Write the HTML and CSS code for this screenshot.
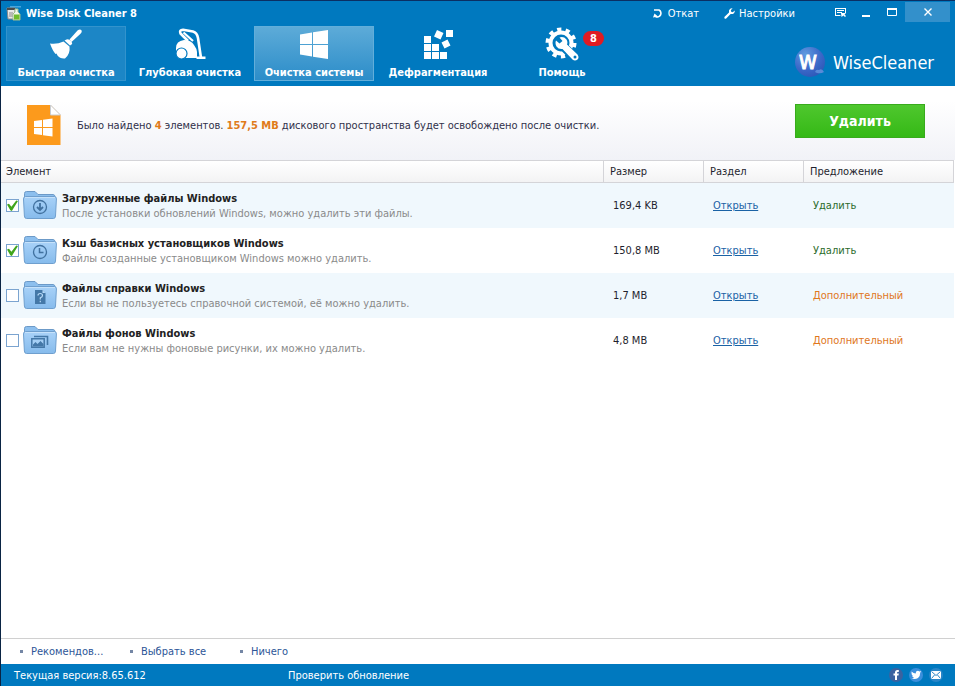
FILE: index.html
```html
<!DOCTYPE html>
<html lang="ru">
<head>
    <meta charset="UTF-8">
    <meta name="viewport" content="width=device-width, initial-scale=1.0">
    <title>Wise Disk Cleaner 8</title>
    <link rel="stylesheet" href="styles.css">
</head>
<body>
    <!-- Shared icon shapes -->
    <svg class="sprite" aria-hidden="true">
        <defs>
            <linearGradient id="folder-fill" x1="0" y1="0" x2="0" y2="1">
                <stop offset="0" stop-color="#a9d2f8"/>
                <stop offset="1" stop-color="#86bbec"/>
            </linearGradient>
            <radialGradient id="ball-fill" cx="0.35" cy="0.25" r="0.85">
                <stop offset="0" stop-color="#5f9ae0"/>
                <stop offset="0.6" stop-color="#3b68c8"/>
                <stop offset="1" stop-color="#2b55b4"/>
            </radialGradient>
        </defs>
        <symbol id="folder" viewBox="0 0 34 28">
            <path d="M1.500 5V2.500Q1.500 .5 3.500 .5H12L15 3.500H30Q32 3.500 32 6V10H1.500Z" fill="#8cbfee" stroke="#6c9ac8"/>
            <path d="M2.500 5.500H31.500Q33.500 5.500 33.400 8L32.500 25Q32.400 27.500 30.500 27.500H3.500Q1.500 27.500 1.400 25L.5 8Q.5 5.500 2.500 5.500Z" fill="url(#folder-fill)" stroke="#6f9fce"/>
            <path d="M2 6.500H32" stroke="#c6e2fb"/>
        </symbol>
    </svg>

    <div class="window">
        <header class="header">
            <div class="titlebar">
                <svg class="app-icon" width="16" height="16" viewBox="0 0 16 16" aria-hidden="true">
                    <path d="M4 1H15V2.500H4Z" fill="#49a6dd"/>
                    <path d="M1 3H9V14H2Z" fill="#e8e8e8" stroke="#8a8a8a"/>
                    <path d="M1 3H9V5H1Z" fill="#4b4b4b"/>
                    <path d="M4 7V12M6 7V12" stroke="#888"/>
                    <path d="M9 4H12V7L14 9V15H7V9L9 7Z" fill="#f2f7ea" stroke="#9dbb8c"/>
                    <path d="M8 9.500H13.500V14.500H8Z" fill="#6fbd2c"/>
                </svg>
                <h1 class="title">Wise Disk Cleaner 8</h1>
                <button class="title-link" type="button">
                    <svg width="11" height="11" viewBox="0 0 11 11" aria-hidden="true">
                        <path d="M1 2H6A3.500 3.500 0 1 1 2.500 8.500" fill="none" stroke="#fff" stroke-width="1.600"/>
                        <path d="M0 9.500L1.500 5.500L5 8.500Z" fill="#fff"/>
                    </svg>
                    Откат
                </button>
                <button class="title-link" type="button">
                    <svg width="11" height="11" viewBox="0 0 11 11" aria-hidden="true">
                        <path d="M.6 8.800L5 4.400Q4.500 2 6.200 .8Q7.400 0 8.600 .3L6.800 2.200L7.200 3.800L8.800 4.200L10.700 2.400Q11 3.700 10.100 4.900Q8.800 6.500 6.600 6L2.200 10.400Q1.300 11 .6 10.400Q0 9.700 .6 8.800Z" fill="#fff"/>
                    </svg>
                    Настройки
                </button>
                <div class="window-controls">
                    <button type="button" aria-label="Сменить оформление">
                        <svg width="11" height="9" viewBox="0 0 11 9" aria-hidden="true">
                            <path d="M0 .5H11M.5 0V7M10.500 0V5M2 2.500H9M2 4.500H7M0 7.500H5.500" stroke="#fff" fill="none"/>
                            <path d="M6 5H11L9.500 6.500L11 8L10 9L8.500 7.500L6.500 9Z" fill="#fff"/>
                        </svg>
                    </button>
                    <button type="button" aria-label="Свернуть">
                        <svg width="10" height="9" viewBox="0 0 10 9" aria-hidden="true"><path d="M1 8H9" stroke="#fff" stroke-width="2"/></svg>
                    </button>
                    <button type="button" aria-label="Развернуть">
                        <svg width="10" height="8" viewBox="0 0 10 8" aria-hidden="true"><path d="M.5 1V7.500H9.500V1M0 1H10" fill="none" stroke="#fff"/><path d="M0 0H10V2H0Z" fill="#fff"/></svg>
                    </button>
                    <button class="close" type="button" aria-label="Закрыть">
                        <svg width="8" height="8" viewBox="0 0 8 8" aria-hidden="true"><path d="M.5 .5L7.500 7.500M7.500 .5L.5 7.500" stroke="#fff" stroke-width="1.400"/></svg>
                    </button>
                </div>
            </div>

            <div class="toolbar">
                <nav class="tabs">
                    <button class="tab hover" type="button">
                        <svg width="34" height="34" viewBox="0 0 34 34" aria-hidden="true">
                            <path d="M20.500 12.500L28.500 3.500Q31 1.500 32.500 3.200Q33.500 5 31.500 6.800L22.500 15Z" fill="#fff"/>
                            <path d="M17.500 12.500Q19.500 11.500 22 14Q24 16.500 22.500 17.500L21 18.500L15.500 13.500Z" fill="#fff"/>
                            <path d="M14.500 14.500L20.500 19.500Q21.500 27 16 31.500Q11 32 8.500 28.500L7.500 26.500L6.500 27Q3.500 23.500 1 16.500Q8 17.500 14.500 14.500Z" fill="#fff"/>
                        </svg>
                        <span>Быстрая очистка</span>
                    </button>
                    <button class="tab" type="button">
                        <svg width="34" height="34" viewBox="0 0 34 34" aria-hidden="true">
                            <path d="M15 14L7.500 6.500Q6 3 10 2.800L20 4.500Q24 5.500 25 11L28 31" fill="none" stroke="#fff" stroke-width="2.600" stroke-linejoin="round"/>
                            <path d="M10.500 5.500L20 14" stroke="#fff" stroke-width="2.200"/>
                            <path d="M3 21Q3 14 11 13Q18 13 21 18Q24 22 24 25V31H13L3 25Z" fill="#fff"/>
                            <path d="M23.500 29.500H32.500V32H23.500Z" fill="#fff"/>
                            <circle cx="8.500" cy="26.500" r="5.500" fill="#fff" stroke="#0079bf" stroke-width="1.200"/>
                        </svg>
                        <span>Глубокая очистка</span>
                    </button>
                    <button class="tab active" type="button">
                        <svg width="34" height="34" viewBox="0 0 34 34" aria-hidden="true">
                            <path d="M3 7.500L15 5.500V17H3ZM16 5.300L31 3V17H16ZM3 18H15V29.500L3 27.500ZM16 18H31V32L16 29.700Z" fill="#fff"/>
                        </svg>
                        <span>Очистка системы</span>
                    </button>
                    <button class="tab" type="button">
                        <svg width="34" height="34" viewBox="0 0 34 34" aria-hidden="true">
                            <path d="M3 9H10V16H3ZM3 17H10V24H3ZM3 25H10V32H3ZM11 17H18V24H11ZM11 25H18V32H11ZM19 25H26V32H19ZM25 3H32V10H25ZM16 3L22.500 6L19.500 12.500L13 9.500ZM20.500 15.500L26.500 12.500L29.500 18.500L23.500 21.500Z" fill="#fff"/>
                        </svg>
                        <span>Дефрагментация</span>
                    </button>
                    <button class="tab" type="button">
                        <svg width="34" height="34" viewBox="0 0 34 34" aria-hidden="true">
                            <circle cx="16" cy="16" r="10.500" fill="none" stroke="#fff" stroke-width="4"/>
                            <circle cx="16" cy="16" r="13.500" fill="none" stroke="#fff" stroke-width="4" stroke-dasharray="4.200 4.282"/>
                            <path d="M17 18L30 31" stroke="#0079bf" stroke-width="9" stroke-linecap="round"/>
                            <path d="M11 13.500L14.500 16.500L17.500 14L14.500 10.500Q18.500 9 21.500 12.500Q23 15 22 17.500L32.500 27.500Q34.500 30.500 32.500 32.500Q30 34.500 27.500 32.500L17.500 22Q13.500 22.500 11.500 19.500Q9.800 16.500 11 13.500Z" fill="#fff"/>
                            <circle cx="30" cy="30" r="1.500" fill="#0079bf"/>
                        </svg>
                        <span>Помощь</span>
                        <span class="badge">8</span>
                    </button>
                </nav>
                <div class="brand">
                    <svg width="34" height="32" viewBox="0 0 34 32" aria-hidden="true">
                        <circle cx="17" cy="16" r="15" fill="url(#ball-fill)"/>
                        <path d="M22 26Q23 23 26 24Q29 22 31 26Q28 28 24 27Z" fill="#5a8ad8"/>
                        <text class="brand-letter" x="15" y="23" text-anchor="middle">W</text>
                    </svg>
                    <span>WiseCleaner</span>
                </div>
            </div>
        </header>

        <section class="summary">
            <svg width="34" height="40" viewBox="0 0 34 40" aria-hidden="true">
                <path d="M0 0H23.500L33.500 10V40H0Z" fill="#fc9a1c"/>
                <path d="M23.500 0V10H33.500Z" fill="#fff" stroke="#c9ccd0"/>
                <path d="M7 16L15 15V22H7ZM16 14.800L25.500 13.500V22H16ZM7 23H15V30L7 29ZM16 23H25.500V31.500L16 30.200Z" fill="#fff"/>
            </svg>
            <p>Было найдено <b>4</b> элементов. <b>157,5 MB</b> дискового пространства будет освобождено после очистки.</p>
            <button class="clean-button" type="button">Удалить</button>
        </section>

        <main class="content">
            <table class="items">
                <colgroup>
                    <col>
                    <col class="col-size">
                    <col class="col-section">
                    <col class="col-advice">
                </colgroup>
                <thead>
                    <tr>
                        <th scope="col">Элемент</th>
                        <th scope="col">Размер</th>
                        <th scope="col">Раздел</th>
                        <th scope="col">Предложение</th>
                    </tr>
                </thead>
                <tbody>
                    <tr>
                        <td>
                            <div class="item">
                                <input type="checkbox" id="downloads" checked>
                                <svg width="34" height="28" viewBox="0 0 34 28" aria-hidden="true">
                                    <use href="#folder"/>
                                    <circle cx="17" cy="16" r="6.500" fill="none" stroke="#41719f" stroke-width="1.300"/>
                                    <path d="M17 12V18M14 16L17 19L20 16" fill="none" stroke="#41719f" stroke-width="1.800"/>
                                </svg>
                                <label for="downloads">
                                    <strong>Загруженные файлы Windows</strong>
                                    <span>После установки обновлений Windows, можно удалить эти файлы.</span>
                                </label>
                            </div>
                        </td>
                        <td>169,4 KB</td>
                        <td><a href="#">Открыть</a></td>
                        <td class="remove">Удалить</td>
                    </tr>
                    <tr>
                        <td>
                            <div class="item">
                                <input type="checkbox" id="installers" checked>
                                <svg width="34" height="28" viewBox="0 0 34 28" aria-hidden="true">
                                    <use href="#folder"/>
                                    <circle cx="17" cy="16" r="6.500" fill="none" stroke="#41719f" stroke-width="1.300"/>
                                    <path d="M16.500 12V16.500H20.500" fill="none" stroke="#41719f" stroke-width="1.500"/>
                                </svg>
                                <label for="installers">
                                    <strong>Кэш базисных установщиков Windows</strong>
                                    <span>Файлы созданные установщиком Windows можно удалить.</span>
                                </label>
                            </div>
                        </td>
                        <td>150,8 MB</td>
                        <td><a href="#">Открыть</a></td>
                        <td class="remove">Удалить</td>
                    </tr>
                    <tr>
                        <td>
                            <div class="item">
                                <input type="checkbox" id="help">
                                <svg width="34" height="28" viewBox="0 0 34 28" aria-hidden="true">
                                    <use href="#folder"/>
                                    <path d="M12 9H19.500L22.500 12V23H12Z" fill="#4478a8"/>
                                    <path d="M19.500 9V12H22.500" fill="#b9dcf9"/>
                                    <path d="M15 14.500Q15 12.500 17.200 12.500Q19.500 12.500 19.500 14.500Q19.500 16 17.300 16.800V18.500M17.300 19.800V21.300" fill="none" stroke="#b9dcf9" stroke-width="1.200"/>
                                </svg>
                                <label for="help">
                                    <strong>Файлы справки Windows</strong>
                                    <span>Если вы не пользуетесь справочной системой, её можно удалить.</span>
                                </label>
                            </div>
                        </td>
                        <td>1,7 MB</td>
                        <td><a href="#">Открыть</a></td>
                        <td class="optional">Дополнительный</td>
                    </tr>
                    <tr>
                        <td>
                            <div class="item">
                                <input type="checkbox" id="wallpapers">
                                <svg width="34" height="28" viewBox="0 0 34 28" aria-hidden="true">
                                    <use href="#folder"/>
                                    <path d="M11 10.500H24.500V19" fill="none" stroke="#4478a8" stroke-width="1.600"/>
                                    <path d="M8.800 12.800H21.200V21.200H8.800Z" fill="#a5cff5" stroke="#4478a8" stroke-width="1.500"/>
                                    <path d="M10 20.500V18.500L12.500 16L14.500 18L17.500 15L20.500 18V20.500Z" fill="#4478a8"/>
                                </svg>
                                <label for="wallpapers">
                                    <strong>Файлы фонов Windows</strong>
                                    <span>Если вам не нужны фоновые рисунки, их можно удалить.</span>
                                </label>
                            </div>
                        </td>
                        <td>4,8 MB</td>
                        <td><a href="#">Открыть</a></td>
                        <td class="optional">Дополнительный</td>
                    </tr>
                </tbody>
            </table>
        </main>

        <ul class="selection">
            <li><button type="button">Рекомендов...</button></li>
            <li><button type="button">Выбрать все</button></li>
            <li><button type="button">Ничего</button></li>
        </ul>

        <footer class="statusbar">
            <span class="version">Текущая версия:8.65.612</span>
            <a href="#">Проверить обновление</a>
            <div class="social">
                <a href="#" aria-label="Facebook">
                    <svg width="14" height="14" viewBox="0 0 14 14" aria-hidden="true">
                        <circle cx="7" cy="7" r="7" fill="#3a62a0"/>
                        <path d="M6 12V7.500H4.500V5.500H6V4.500Q6 2 8.500 2H9.800V4H8.800Q8 4 8 4.800V5.500H9.800L9.500 7.500H8V12Z" fill="#fff"/>
                    </svg>
                </a>
                <a href="#" aria-label="Twitter">
                    <svg width="14" height="14" viewBox="0 0 14 14" aria-hidden="true">
                        <circle cx="7" cy="7" r="7" fill="#3b8fdc"/>
                        <path d="M2.500 3.500Q4.500 5.500 6.700 5.500Q6.500 3 8.800 2.800Q9.800 2.800 10.300 3.400L12 3L11.200 4.700Q11.300 8 9 10Q6 12 2.300 10.300Q4 10.200 5 9.400Q3.500 9 3.200 7.900H4Q2.600 7.200 2.600 5.800Z" fill="#fff"/>
                    </svg>
                </a>
                <a href="#" aria-label="Почта">
                    <svg width="14" height="14" viewBox="0 0 14 14" aria-hidden="true">
                        <circle cx="7" cy="7" r="7" fill="#2a86c8"/>
                        <path d="M2 3H12V11H2Z" fill="#fff"/>
                        <path d="M2.500 3.500L7 7.500L11.500 3.500M2.500 10.500L5.500 7M11.500 10.500L8.500 7" fill="none" stroke="#2a86c8"/>
                    </svg>
                </a>
            </div>
        </footer>
    </div>
</body>
</html>
```
FILE: styles.css
```css
* {
    box-sizing: border-box;
}

body {
    margin: 0;
    font-family: Tahoma, "DejaVu Sans Condensed", "DejaVu Sans", sans-serif;
    font-size: 11px;
    line-height: 15px;
    color: #1f1f2e;
}

button {
    padding: 0;
    border: 0;
    background: none;
    font: inherit;
    color: inherit;
    cursor: pointer;
}

svg {
    display: block;
    flex-shrink: 0;
}

.sprite {
    position: absolute;
    width: 0;
    height: 0;
}

.window {
    display: flex;
    flex-direction: column;
    min-height: 100vh;
    border-top: 1px solid #0a2f63;
    border-left: 1px solid #0a2444;
    background-color: #fff;
}

/* Header */
.header {
    background-color: #0079bf;
    color: #fff;
}

.titlebar {
    display: flex;
    align-items: center;
    height: 24px;
    padding: 0 5px;
}

.title {
    flex: 1;
    margin: 0 0 0 4px;
    font-size: 11px;
    font-weight: bold;
}

.title-link {
    display: flex;
    align-items: center;
    gap: 4px;
    margin-right: 25px;
}

.window-controls {
    display: flex;
    align-self: flex-start;
    margin-left: 7px;
    padding-top: 1px;
}

.window-controls button {
    display: flex;
    align-items: center;
    justify-content: center;
    width: 26px;
    height: 20px;
}

.window-controls .close {
    width: 45px;
    background-color: #3390cb;
}

.toolbar {
    display: flex;
    justify-content: space-between;
    padding: 1px 21px 5px 5px;
}

.tabs {
    display: flex;
    gap: 4px;
}

.tab {
    position: relative;
    display: flex;
    flex-direction: column;
    align-items: center;
    justify-content: space-between;
    width: 120px;
    height: 55px;
    border: 1px solid transparent;
    font-weight: bold;
    white-space: nowrap;
}

.tab.hover {
    border-color: #3393cc;
    background-color: #1c86c6;
}

.tab.active {
    border-color: #62aeda;
    background-image: linear-gradient(#5dabd8, #2c8dc9);
}

.badge {
    position: absolute;
    top: 4px;
    right: 17px;
    width: 21px;
    border-radius: 8px;
    background-color: #e01b22;
}

.brand {
    display: flex;
    align-items: center;
    gap: 6px;
    padding-top: 17px;
    font-size: 18px;
}

.brand-letter {
    font-size: 20px;
    fill: #fff;
    stroke: #fff;
    stroke-width: 1px;
}

/* Scan result */
.summary {
    display: flex;
    align-items: center;
    height: 74px;
    padding: 4px 30px 0 26px;
    background-image: linear-gradient(#fff 20%, #f1f2f7);
}

.summary p {
    flex: 1;
    margin: 0 0 0 16px;
    color: #30304a;
}

.summary b {
    color: #e07b1a;
}

.clean-button {
    width: 130px;
    height: 34px;
    margin-bottom: 8px;
    border: 1px solid #38ab1c;
    background-image: linear-gradient(#4fc72e, #35b916);
    color: #fff;
    font-size: 14px;
    font-weight: bold;
}

/* Items table */
.content {
    flex: 1;
    padding-right: 1px;
}

.items {
    width: 100%;
    border-collapse: separate;
    border-spacing: 0;
    table-layout: fixed;
}

.col-size,
.col-section {
    width: 100px;
}

.col-advice {
    width: 150px;
}

.items th {
    height: 23px;
    padding: 0 6px;
    border: solid #d4d4d8;
    border-width: 1px 1px 1px 0;
    background-image: linear-gradient(#fff, #f3f3f4);
    font-weight: normal;
    text-align: left;
}

.items th:first-child {
    padding-left: 5px;
}

.items td {
    height: 45px;
    padding: 0 9px;
}

.items td:first-child {
    padding: 0 5px;
}

.items tbody tr:nth-child(odd) {
    background-color: #f0f8fd;
}

.items a {
    color: #1a62a5;
}

.item {
    display: flex;
    align-items: center;
}

.item svg {
    margin: 0 5px 2px 4px;
}

.item strong,
.item span {
    display: block;
}

.item strong {
    color: #222;
}

.item span {
    color: #8a8a8a;
}

.item input {
    appearance: none;
    width: 13px;
    height: 13px;
    margin: 0;
    border: 1px solid #7ba4d0;
    background-color: #fff;
}

.item input:checked::before {
    content: "";
    display: block;
    width: 11px;
    height: 11px;
    background-color: #3fa51c;
    clip-path: polygon(0 42%, 18% 34%, 40% 62%, 84% 4%, 100% 10%, 44% 100%, 30% 94%);
}

.items .remove {
    color: #2b6b2b;
}

.items .optional {
    color: #e0771c;
}

/* Bottom bars */
.selection {
    display: flex;
    margin: 0;
    padding: 0 19px;
    border-top: 1px solid #d0d0d0;
    list-style: none;
    color: #2d5597;
}

.selection li {
    display: flex;
    align-items: center;
    gap: 8px;
    width: 110px;
    height: 25px;
}

.selection li::before {
    content: "";
    width: 3px;
    height: 3px;
    background-color: #7487a5;
}

.statusbar {
    display: grid;
    grid-template-columns: 274px 1fr auto;
    align-items: center;
    height: 22px;
    padding: 0 12px 0 13px;
    background-color: #0079bf;
    color: #fff;
}

.statusbar a {
    color: inherit;
    text-decoration: none;
}

.social {
    display: flex;
    gap: 6px;
}
```
